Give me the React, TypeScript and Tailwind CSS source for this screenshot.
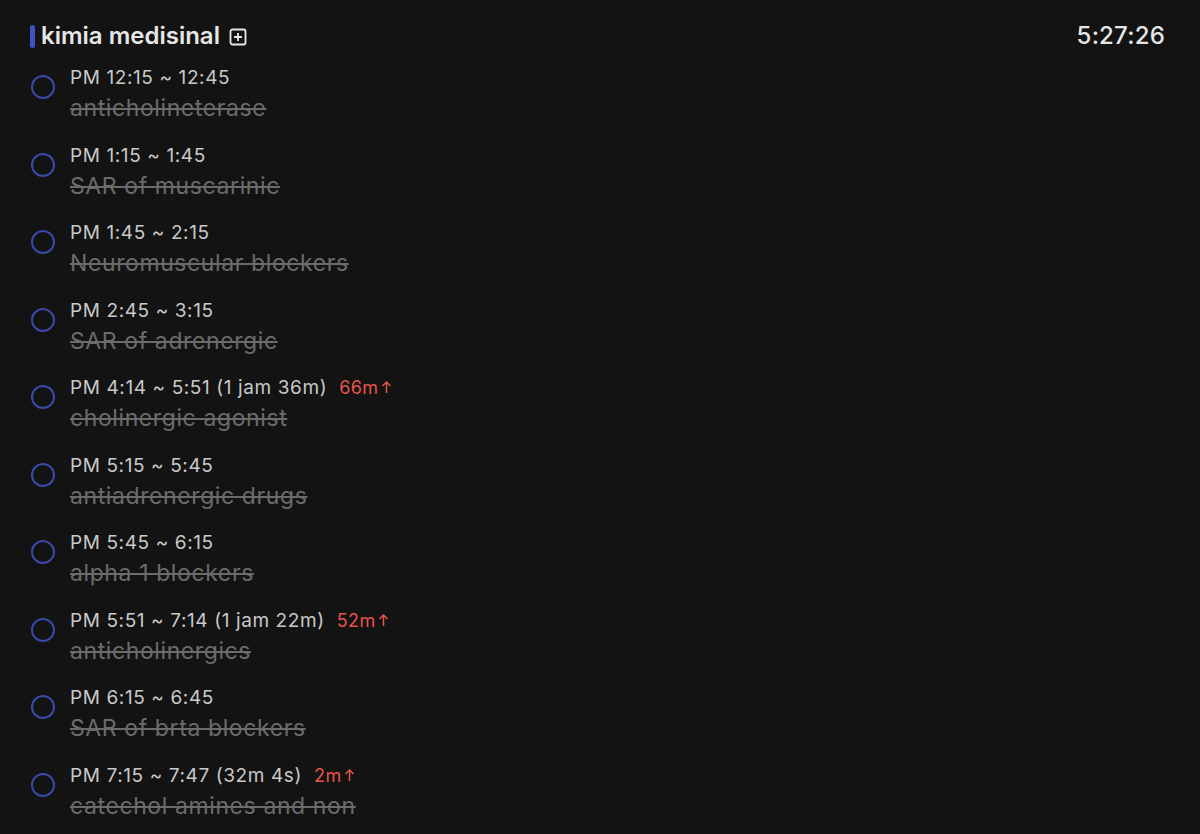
const rows: { time: string; title: string; late?: string }[] = [
  { time: "PM 12:15 ~ 12:45", title: "anticholineterase" },
  { time: "PM 1:15 ~ 1:45", title: "SAR of muscarinic" },
  { time: "PM 1:45 ~ 2:15", title: "Neuromuscular blockers" },
  { time: "PM 2:45 ~ 3:15", title: "SAR of adrenergic" },
  { time: "PM 4:14 ~ 5:51 (1 jam 36m)", title: "cholinergic agonist", late: "66m" },
  { time: "PM 5:15 ~ 5:45", title: "antiadrenergic drugs" },
  { time: "PM 5:45 ~ 6:15", title: "alpha 1 blockers" },
  { time: "PM 5:51 ~ 7:14 (1 jam 22m)", title: "anticholinergics", late: "52m" },
  { time: "PM 6:15 ~ 6:45", title: "SAR of brta blockers" },
  { time: "PM 7:15 ~ 7:47 (32m 4s)", title: "catechol amines and non", late: "2m" },
];

function PlusBox() {
  return (
    <svg width="18" height="18" viewBox="0 0 18 18" fill="none" className="ml-[9px] mt-[1px]">
      <rect x="1.5" y="1.5" width="15" height="15" rx="2" stroke="#e8e8e8" strokeWidth="1.8" />
      <path d="M9 5v8M5 9h8" stroke="#e8e8e8" strokeWidth="1.8" />
    </svg>
  );
}

export default function App() {
  return (
    <div
      className="w-[1200px] h-[834px] bg-[#131313] overflow-hidden text-[#e6e6e6]"
      style={{ fontFamily: "Inter, 'Noto Sans', sans-serif" }}
    >
      <div className="flex items-center justify-between pl-[30px] pr-[35px] pt-[23px]">
        <div className="flex items-center">
          <span className="w-[5px] h-[23px] rounded-full bg-[#3f51c4] mr-[6px]" />
          <span className="text-[24px] font-semibold leading-[26px]">kimia medisinal</span>
          <PlusBox />
        </div>
        <span className="text-[24px] font-medium leading-[26px] tracking-[0.2px]">5:27:26</span>
      </div>

      <div className="flex flex-col pl-[31px] pt-[17px]">
        {rows.map((r) => (
          <div key={r.time} className="flex items-start h-[77.5px]">
            <div className="w-[24px] h-[24px] rounded-full border-2 border-[#3a48a8] mt-[9px] mr-[15px] shrink-0" />
            <div className="flex flex-col">
              <div className="flex items-center text-[19px] leading-[24px] tracking-[0.6px] text-[#c9c9c9]">
                <span>{r.time}</span>
                {r.late && (
                  <span className="ml-[12px] text-[18px] tracking-[0.4px] text-[#e5534b] flex items-center">
                    {r.late}
                    <svg width="11" height="14" viewBox="0 0 11 14" fill="none" className="ml-[2px] mb-[2px]">
                      <path d="M5.5 13V2M1.5 6L5.5 2l4 4" stroke="#e5534b" strokeWidth="1.5" />
                    </svg>
                  </span>
                )}
              </div>
              <span className="mt-[4px] text-[23px] leading-[28px] tracking-[0.6px] text-[#6b6b6b] line-through">
                {r.title}
              </span>
            </div>
          </div>
        ))}
      </div>
    </div>
  );
}
